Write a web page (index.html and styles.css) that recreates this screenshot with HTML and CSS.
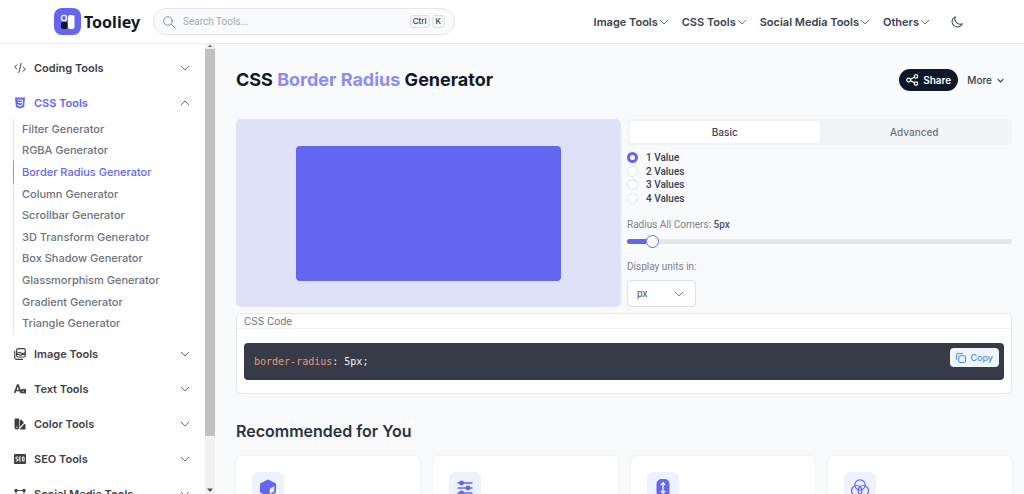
FILE: index.html
```html
<!DOCTYPE html>
<html lang="en">
<head>
<meta charset="utf-8">
<meta name="viewport" content="width=device-width, initial-scale=1">
<title>CSS Border Radius Generator - Tooliey</title>
<link rel="stylesheet" href="styles.css">
</head>
<body>
<svg class="sprite" aria-hidden="true">
  <symbol id="down" viewBox="0 0 10 10"><path d="M1 3l4 4 4-4" fill="none" stroke="currentColor"/></symbol>
  <symbol id="up" viewBox="0 0 10 10"><path d="M1 7l4-4 4 4" fill="none" stroke="currentColor"/></symbol>
</svg>
<header class="topbar">
  <a class="brand" href="#">
    <svg width="27" height="27" viewBox="0 0 27 27" aria-hidden="true"><rect width="27" height="27" rx="8" fill="#6366f1"/><circle cx="10" cy="10" r="2.6" fill="#6366f1" stroke="#fff" stroke-width="1.3"/><rect x="7" y="14" width="6.500" height="7" rx="2" fill="#0f172a"/><rect x="14" y="7" width="6.500" height="14" rx="2" fill="#fff"/></svg>
    <span>Tooliey</span>
  </a>
  <label class="search">
    <svg width="12" height="12" viewBox="0 0 12 12" fill="none" stroke="#8b929d" stroke-linecap="round" aria-hidden="true"><circle cx="5" cy="5" r="4.300"/><path d="M8.200 8.200l3.200 3.200"/></svg>
    <input type="search" placeholder="Search Tools..." aria-label="Search Tools">
    <kbd>Ctrl</kbd><kbd>K</kbd>
  </label>
  <nav class="menu">
    <button type="button">Image Tools<svg class="chev"><use href="#down"/></svg></button>
    <button type="button">CSS Tools<svg class="chev"><use href="#down"/></svg></button>
    <button type="button">Social Media Tools<svg class="chev"><use href="#down"/></svg></button>
    <button type="button">Others<svg class="chev"><use href="#down"/></svg></button>
  </nav>
  <button class="theme" type="button" aria-label="Toggle theme"><svg width="12" height="12" viewBox="0 0 12 12" fill="none" stroke="#4b5563" stroke-width="1.100" stroke-linejoin="round"><path d="M4.300.8A5.300 5.300 0 1 0 11.300 7.700 5.300 5.300 0 0 1 4.300.8z"/></svg></button>
</header>
<div class="body">
  <aside class="sidebar">
    <nav class="groups">
      <button class="group" type="button"><svg viewBox="0 0 12 12" fill="none" stroke="currentColor"><path d="M3.200 2.500L.7 5l2.300 2.300M8.800 4.700l2.500 2.500-2.500 2.500M7.300 1L4.700 11"/></svg><span>Coding Tools</span><svg class="chev"><use href="#down"/></svg></button>
      <button class="group active" type="button"><svg viewBox="0 0 12 12"><path d="M1 .5h10l-.9 9.500L6 11.500 1.900 10z" fill="currentColor"/><path d="M3.400 3h5L8 8.300l-2 .7-2-.7-.1-1.200M4 5.500h4" fill="none" stroke="#fff"/></svg><span>CSS Tools</span><svg class="chev"><use href="#up"/></svg></button>
      <ul class="links">
        <li><a href="#">Filter Generator</a></li>
        <li><a href="#">RGBA Generator</a></li>
        <li><a class="current" href="#">Border Radius Generator</a></li>
        <li><a href="#">Column Generator</a></li>
        <li><a href="#">Scrollbar Generator</a></li>
        <li><a href="#">3D Transform Generator</a></li>
        <li><a href="#">Box Shadow Generator</a></li>
        <li><a href="#">Glassmorphism Generator</a></li>
        <li><a href="#">Gradient Generator</a></li>
        <li><a href="#">Triangle Generator</a></li>
      </ul>
      <button class="group" type="button"><svg viewBox="0 0 12 12" fill="none" stroke="currentColor" stroke-width="1.200"><rect x="2.600" y=".7" width="8.700" height="8.300" rx="1.500"/><path d="M.7 3v6.500q0 1.800 1.800 1.800h6.500M3 6q2-2.500 4-1t4-.5M3 6.500h2q1 1.500 3 0h3"/></svg><span>Image Tools</span><svg class="chev"><use href="#down"/></svg></button>
      <button class="group" type="button"><svg viewBox="0 0 12 12" fill="none" stroke="currentColor" stroke-width="1.700"><path d="M.6 10L3.500 2h.6L7 10M1.800 7.500h4"/><circle cx="9" cy="8.200" r="1.500"/><path d="M11.200 6v4.400"/></svg><span>Text Tools</span><svg class="chev"><use href="#down"/></svg></button>
      <button class="group" type="button"><svg viewBox="0 0 12 12" fill="currentColor"><path d="M1.500.5h3.700v8.700a2.300 2.300 0 0 1-4.700 0V1.500q0-1 1-1z"/><path d="M5.800 2.300l1.500-.8 2.700 3.200L5.800 9.300zM10.300 6h.2q1 0 1 1v4.500H5.300z"/><circle cx="2.800" cy="9.200" r=".6" fill="#fff"/></svg><span>Color Tools</span><svg class="chev"><use href="#down"/></svg></button>
      <button class="group" type="button"><svg viewBox="0 0 12 12"><rect y="1" width="12" height="10" rx="1" fill="currentColor"/><path d="M3.900 4H2v2h1.600v2H1.700M7 4H5.200v4H7M5.200 6h1.500M8.500 4h1.600v4H8.500z" fill="none" stroke="#fff" stroke-width=".9"/></svg><span>SEO Tools</span><svg class="chev"><use href="#down"/></svg></button>
      <button class="group" type="button"><svg viewBox="0 0 12 12"><path d="M2 2.500h8M2 2.500V10M10 2.500V10M2 10h8" fill="none" stroke="currentColor" stroke-width=".9"/><g fill="currentColor"><circle cx="2" cy="2.500" r="1.700"/><circle cx="10" cy="2.500" r="1.700"/><circle cx="2" cy="10" r="1.700"/><circle cx="10" cy="10" r="1.700"/></g></svg><span>Social Media Tools</span><svg class="chev"><use href="#down"/></svg></button>
    </nav>
    <div class="scroll" aria-hidden="true">
      <svg width="10" height="5" viewBox="0 0 10 5"><path d="M3 3l2-2 2 2z" fill="#505050"/></svg>
      <div class="thumb"></div>
      <svg class="scroll-end" width="10" height="8" viewBox="0 0 10 8"><path d="M2 2.500h6L5 6z" fill="#505050"/></svg>
    </div>
  </aside>
  <main class="content">
    <div class="heading">
      <h1>CSS <em>Border Radius</em> Generator</h1>
      <button class="share" type="button"><svg width="13" height="12" viewBox="0 0 13 12" fill="none" stroke="#fff" stroke-width="1.200"><circle cx="2.700" cy="6" r="1.900"/><circle cx="10" cy="2.400" r="1.700"/><circle cx="10" cy="9.600" r="1.700"/><path d="M4.500 5.200l3.900-2M4.500 6.800l3.900 2"/></svg>Share</button>
      <button class="more" type="button">More<svg width="7" height="7" viewBox="0 0 10 10"><path d="M1 3l4 4 4-4" fill="none" stroke="currentColor" stroke-width="1.700"/></svg></button>
    </div>
    <div class="editor">
      <div class="preview"><div class="shape"></div></div>
      <form class="controls">
        <div class="tabs" role="tablist">
          <button type="button" role="tab" aria-selected="true">Basic</button>
          <button type="button" role="tab" aria-selected="false">Advanced</button>
        </div>
        <div class="radios">
          <label><input type="radio" name="values" checked>1 Value</label>
          <label><input type="radio" name="values">2 Values</label>
          <label><input type="radio" name="values">3 Values</label>
          <label><input type="radio" name="values">4 Values</label>
        </div>
        <div class="field slider">
          <label for="radius">Radius All Corners: <b>5px</b></label>
          <input id="radius" type="range" min="0" max="100" value="5">
        </div>
        <div class="field unit">
          <label for="unit">Display units in:</label>
          <span class="select"><select id="unit"><option>px</option><option>%</option><option>em</option></select><svg class="chev"><use href="#down"/></svg></span>
        </div>
      </form>
    </div>
    <section class="code">
      <h2>CSS Code</h2>
      <div class="block">
        <pre><code><span>border-radius</span>: 5px;</code></pre>
        <button type="button"><svg width="10" height="10" viewBox="0 0 10 10" fill="none" stroke="currentColor"><rect x="2.700" y="2.700" width="6.800" height="6.800" rx="1.300"/><path d="M1.200 7.200Q.5 7 .5 6V2Q.5.5 2 .5h4q1 0 1.200.8"/></svg>Copy</button>
      </div>
    </section>
    <section class="recommended">
      <h2>Recommended for You</h2>
      <div class="cards">
        <a class="card" href="#" aria-label="3D Transform"><span><svg viewBox="0 0 18 18"><path d="M9 .5l8 4v9l-8 4-8-4v-9z" fill="currentColor"/><path d="M10.800 9.800l4.400-2.600v5l-4.400 2.800z" fill="#eef2ff"/></svg></span></a>
        <a class="card" href="#" aria-label="Filter"><span><svg viewBox="0 0 18 18" fill="currentColor" stroke="currentColor" stroke-width="1.500"><path d="M1.500 4h15M1.500 9h15M1.500 14h15"/><circle cx="5.500" cy="4" r="1.700"/><circle cx="12" cy="9" r="1.700"/><circle cx="5.500" cy="14" r="1.700"/></svg></span></a>
        <a class="card" href="#" aria-label="Scrollbar"><span><svg viewBox="0 0 18 18"><rect x="2.500" y="0" width="13" height="18" rx="5" fill="currentColor"/><path d="M9 4v10M6.800 6L9 3.800 11.200 6M6.800 12L9 14.200l2.200-2.200" fill="none" stroke="#eef2ff" stroke-width="1.400"/></svg></span></a>
        <a class="card" href="#" aria-label="Color"><span><svg viewBox="0 0 18 18" fill="none" stroke="currentColor" stroke-width="1.200"><circle cx="9" cy="6" r="5.200"/><circle cx="5.700" cy="11.700" r="5.200"/><circle cx="12.300" cy="11.700" r="5.200"/></svg></span></a>
      </div>
    </section>
  </main>
</div>
</body>
</html>
```
FILE: styles.css
```css
* { box-sizing: border-box; }
body {
  margin: 0;
  height: 100vh;
  display: flex;
  flex-direction: column;
  overflow: hidden;
  background: #f8fafc;
  color: #374151;
  font: 10px/14px Inter, "Liberation Sans", sans-serif;
}
button, input, select { font: inherit; color: inherit; }
button { border: 0; background: none; padding: 0; display: flex; align-items: center; white-space: nowrap; }
a { color: inherit; text-decoration: none; }
h1, h2, ul, pre { margin: 0; padding: 0; }
svg { flex: none; display: block; }
.sprite { position: absolute; width: 0; height: 0; }
.chev { width: 10px; height: 10px; }

.topbar {
  flex: none;
  height: 44px;
  display: flex;
  align-items: center;
  padding: 0 61px 0 54px;
  background: #fff;
  border-bottom: 1px solid #e9ebf3;
}
.brand { display: flex; align-items: center; gap: 3px; font: 700 16px/24px "Noto Sans", sans-serif; color: #0f172a; width: 99px; }
.search {
  flex: 0 1 302px;
  height: 27px;
  display: flex;
  align-items: center;
  gap: 2px;
  padding: 0 9px 0 9px;
  border: 1px solid #e2e5ea;
  border-radius: 14px;
  background: #f9fafb;
}
.search input { flex: 1; min-width: 0; border: 0; outline: 0; background: none; padding: 0 6px; font-family: Roboto, sans-serif; }
.search input::placeholder { color: #a3a9b3; opacity: 1; }
kbd { font: 500 8px/11px Inter, sans-serif; border: 1px solid #dfe2e7; border-radius: 3px; padding: 0 2px; background: #f3f4f6; }
kbd:last-child { padding: 0 3px; }
.menu { margin-left: auto; display: flex; gap: 13px; font-size: 11px; font-weight: 600; }
.menu button { gap: 1px; }
.menu .chev { color: #6b7280; }
.theme { margin-left: 21px; }

.body { flex: 1; min-height: 0; display: flex; }
.sidebar { flex: none; width: 215px; display: flex; background: #fff; }
.groups { flex: 1; overflow: hidden; display: flex; flex-direction: column; gap: 4px; padding: 8px 15px 0 14px; }
.group { flex: none; height: 31px; gap: 8px; font-size: 11px; font-weight: 600; color: #3f4147; }
.group svg:first-child { width: 12px; height: 12px; }
.group .chev { margin-left: auto; color: #6b7280; }
.group.active, .active .chev { color: #6366f1; }
.links {
  flex: none;
  height: 216px;
  margin-top: -4px;
  margin-left: -1px;
  display: grid;
  grid-auto-rows: 1fr;
  list-style: none;
  box-shadow: inset 1px 0 #e5e7eb;
  font-size: 11px;
  font-weight: 500;
  color: #6b7280;
}
.links li { display: grid; }
.links a { display: flex; align-items: center; padding-left: 9px; }
.links .current { color: #6366f1; border-left: 1px solid #8b8df3; padding-left: 8px; }
.scroll { width: 10px; display: flex; flex-direction: column; background: #f1f1f1; }
.thumb { height: 86%; background: #c1c1c1; }
.scroll-end { margin-top: auto; }

.content { flex: 1; min-width: 0; overflow: hidden; padding: 23px 12px 0 21px; }
.heading { display: flex; align-items: center; height: 26px; margin-bottom: 26px; }
h1 { font-size: 18px; line-height: 26px; font-weight: 700; color: #111827; margin-right: auto; white-space: nowrap; }
h1 em { font-style: normal; color: #8b8df3; }
.share { height: 22px; padding: 0 7px; gap: 4px; border-radius: 11px; background: #0f172a; color: #fff; font-size: 10px; font-weight: 600; }
.more { font-weight: 500; padding: 0 8px 0 9px; gap: 5px; }

.editor { display: grid; grid-template-columns: 1fr 1fr; gap: 6px; }
.preview { display: grid; place-items: center; background: #dfe1f8; border-radius: 5px; }
.shape { width: 69%; height: 135px; background: #6366f1; border-radius: 4px; }
.controls { display: flex; flex-direction: column; }
.tabs { display: grid; grid-template-columns: 1fr 1fr; height: 26px; padding: 2px 3px; background: #f3f4f6; border-radius: 4px; }
.tabs button { justify-content: center; border-radius: 4px; font-weight: 500; color: #6b7280; }
.tabs [aria-selected="true"] { background: #fff; color: #374151; }
.radios { display: grid; grid-auto-rows: 1fr; height: 54px; margin-top: 6px; font: 500 10px/13px Roboto, sans-serif; }
.radios label { display: flex; align-items: center; gap: 8px; }
.radios input { appearance: none; width: 11px; height: 11px; margin: 0; border: 1px solid #e0e3e8; border-radius: 50%; background: #fff; }
.radios input:checked { border: 3px solid #6366f1; }
.field { display: flex; flex-direction: column; color: #7b818c; font-family: Roboto, sans-serif; }
.field b { font-weight: 500; color: #4b5563; }
.slider { margin-top: 13px; }
.slider input { appearance: none; width: 100%; height: 13px; margin: 3px 0 0; background: none; }
.slider input::-webkit-slider-runnable-track { height: 5px; border-radius: 3px; background: linear-gradient(to right, #6366f1 5%, #e5e7eb 5%); }
.slider input::-webkit-slider-thumb { appearance: none; width: 13px; height: 13px; margin-top: -4px; border: 1px solid #6366f1; border-radius: 50%; background: #fff; }
.unit { margin-top: 12px; gap: 6px; }
.select { display: grid; align-items: center; width: 69px; }
.select > * { grid-area: 1 / 1; }
.select select { appearance: none; height: 27px; padding: 0 9px; border: 1px solid #dcdfe4; border-radius: 4px; background: #fff; color: #4b5563; }
.select .chev { justify-self: end; margin-right: 12px; pointer-events: none; }

.code { margin-top: 6px; background: #fff; border: 1px solid #e8eaee; border-radius: 5px; }
.code h2 { font: 400 10px/14px Inter, sans-serif; color: #6b7280; padding: 0 7px; border-bottom: 1px solid #eceef1; }
.block { display: flex; justify-content: space-between; align-items: flex-start; margin: 14px 7px 13px; padding: 5px; background: #373b47; border-radius: 4px; }
.block pre { padding: 5px; font: 10px/17px "DejaVu Sans Mono", monospace; color: #f3f4f6; }
.block code { font: inherit; }
.block pre span { color: #e8967a; }
.block button { height: 19px; gap: 4px; padding: 0 6px; border-radius: 4px; background: #eff6ff; color: #4f8fd9; font-size: 9px; font-weight: 500; }
.recommended h2 { margin-top: 25px; font-size: 16px; line-height: 24px; font-weight: 600; color: #2b3342; }
.cards { display: grid; grid-template-columns: repeat(4, 1fr); gap: 13px; margin-top: 13px; }
.card { height: 120px; padding: 16px; background: #fff; border-radius: 5px; box-shadow: 0 0 2px #dfe3ea; }
.card span { display: grid; place-items: center; width: 32px; height: 32px; border-radius: 6px; background: #eef2ff; color: #6366f1; }
.card svg { width: 18px; height: 18px; }
```
